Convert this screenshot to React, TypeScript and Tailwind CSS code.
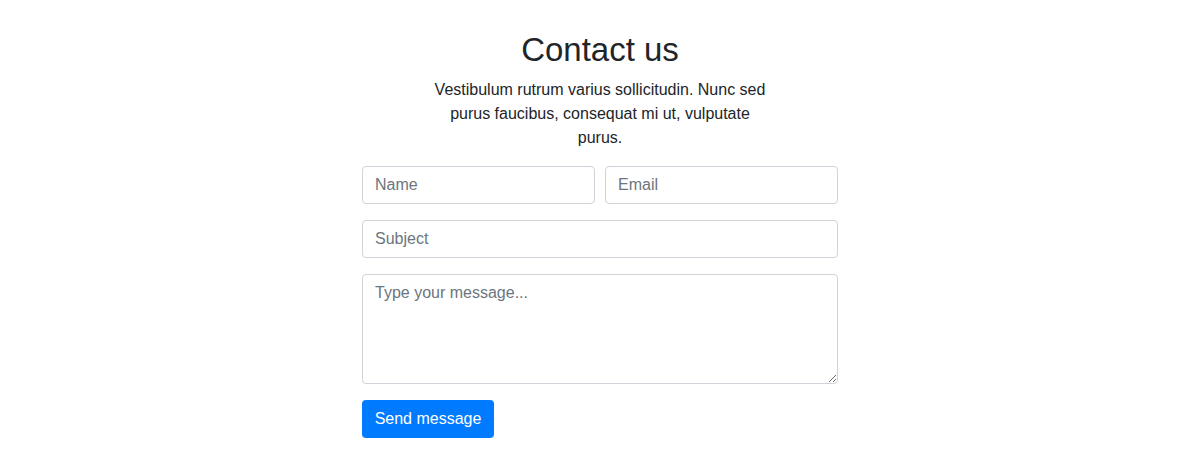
export default function App() {
    const field =
        "w-full h-[38px] rounded-[4px] border border-[#ced4da] bg-white px-3 text-base text-[#495057] placeholder:text-[#6c757d] outline-none";

    return (
        <div className="min-h-[470px] bg-white font-['Liberation_Sans',Arial,sans-serif] text-[#212529]">
            <div className="mx-auto w-[476px] pt-[30px]">
                <h2 className="mb-2 text-center text-[33px] leading-[1.2] font-normal">Contact us</h2>
                <p className="mx-auto mb-4 max-w-[340px] text-center text-base leading-6">
                    Vestibulum rutrum varius sollicitudin. Nunc sed purus faucibus, consequat mi ut, vulputate purus.
                </p>

                <form className="flex flex-col gap-4">
                    <div className="flex gap-[10px]">
                        <input type="text" placeholder="Name" className={field} />
                        <input type="email" placeholder="Email" className={field} />
                    </div>
                    <input type="text" placeholder="Subject" className={field} />
                    <textarea
                        rows={4}
                        placeholder="Type your message..."
                        className="block h-[110px] w-full resize-y rounded-[4px] border border-[#ced4da] bg-white px-3 py-1.5 text-base leading-6 text-[#495057] placeholder:text-[#6c757d] outline-none"
                    />
                    <div>
                        <button
                            type="button"
                            className="h-[38px] w-[132px] rounded-[4px] bg-[#007bff] text-base text-white"
                        >
                            Send message
                        </button>
                    </div>
                </form>
            </div>
        </div>
    );
}
